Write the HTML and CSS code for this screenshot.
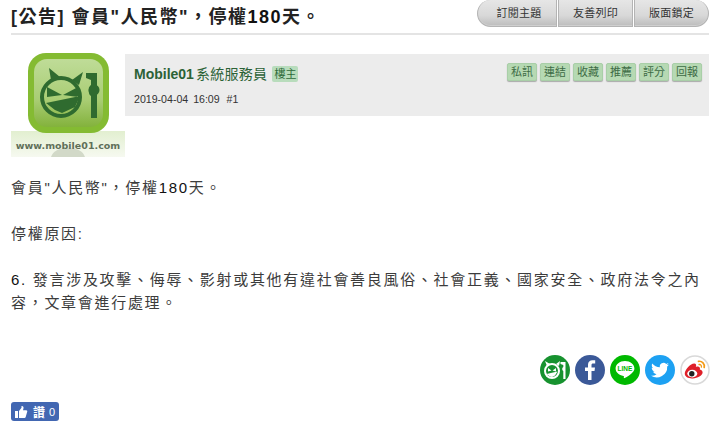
FILE: index.html
```html
<!DOCTYPE html>
<html lang="zh-Hant">
<head>
    <meta charset="UTF-8">
    <title>[公告] 會員"人民幣"，停權180天。</title>
    <link rel="stylesheet" href="styles.css">
</head>
<body>
    <div class="topic-head">
        <h1 class="topic-title">[公告] 會員"人民幣"，停權<span class="num">180</span>天。</h1>
        <div class="topic-tools">
            <a class="tool-btn tool-first">訂閱主題</a>
            <a class="tool-btn">友善列印</a>
            <a class="tool-btn tool-last">版面鎖定</a>
        </div>
    </div>

    <div class="post">
        <div class="avatar">
            <svg width="114" height="110" viewBox="0 0 114 110">
                <defs>
                    <linearGradient id="tile" x1="0" y1="0" x2="0" y2="1">
                        <stop offset="0" stop-color="#bfdc98"/>
                        <stop offset="0.6" stop-color="#a9cd74"/>
                        <stop offset="1" stop-color="#83b23c"/>
                    </linearGradient>
                    <linearGradient id="strip" x1="0" y1="0" x2="0" y2="1">
                        <stop offset="0" stop-color="#e2efd0"/>
                        <stop offset="1" stop-color="#f6f9f0"/>
                    </linearGradient>
                </defs>
                <rect x="0" y="82" width="114" height="26" fill="url(#strip)"/>
                <path d="M40 108c2-6 8-9 17-9s15 3 17 9z" fill="#d2d9c8"/>
                <rect x="17" y="4" width="81" height="80" rx="18" fill="#84bb32"/>
                <rect x="23" y="10" width="69" height="68" rx="13" fill="url(#tile)"/>
                <circle cx="50" cy="48" r="19" fill="none" stroke="#2f6b2f" stroke-width="4"/>
                <path d="M40 31l-2-12 11 9zM61 31l11-8-4 13z" fill="#2f6b2f"/>
                <path d="M36 38l15 8-15 2zM67 38l-15 8 15 2zM35 54l34-7-5 11-13 6-7-3z" fill="#2f6b2f"/>
                <path d="M75 24h11v45h-6V47c-3-1-3-9 0-11v-5l-5-2z" fill="#2f6b2f"/>
                <circle cx="83" cy="41" r="5.500" fill="#2f6b2f"/>
                <text class="avatar-url" x="57" y="100" text-anchor="middle">www.mobile01.com</text>
            </svg>
        </div>
        <div class="post-head">
            <div class="author-info">
                <div class="author-line">
                    <a class="author-name"><b>Mobile01</b><span class="author-cjk">系統服務員</span></a>
                    <span class="owner-tag">樓主</span>
                </div>
                <div class="post-date">2019-04-04 16:09 <span class="post-no">#1</span></div>
            </div>
            <div class="post-actions">
                <a class="act-btn">私訊</a>
                <a class="act-btn">連結</a>
                <a class="act-btn">收藏</a>
                <a class="act-btn">推薦</a>
                <a class="act-btn">評分</a>
                <a class="act-btn">回報</a>
            </div>
        </div>
    </div>

    <div class="post-body">
        <p>會員"人民幣"，停權<span class="num">180</span>天。</p>
        <p>停權原因:</p>
        <p class="post-rule">6. 發言涉及攻擊、侮辱、影射或其他有違社會善良風俗、社會正義、國家安全、政府法令之內容，文章會進行處理。</p>
    </div>

    <div class="share-row">
        <svg class="share-icon" viewBox="0 0 30 30">
            <circle cx="15" cy="15" r="15" fill="#17922f"/>
            <circle cx="12" cy="16" r="7" fill="none" stroke="#fff" stroke-width="2"/>
            <path d="M7 11L5 6l5 3zM16 9l4-3-1 5zM8 13l3.500 2.500-3.500 1zM16 13l-3.500 2.500 3.500 1zM6.500 19l11-2.500-2.500 4-3 1.500-2-.5z" fill="#fff"/>
            <path d="M20.500 7h5v17h-2.200v-8c-1.500-.5-1.500-3.500 0-4v-2l-2.800-1z" fill="#fff"/>
        </svg>
        <svg class="share-icon" viewBox="0 0 30 30">
            <circle cx="15" cy="15" r="15" fill="#3b5998"/>
            <path d="M16.500 25v-9h3l.5-3.600h-3.500v-2.200c0-1 .3-1.700 1.800-1.700h1.900V5.300c-.3 0-1.400-.1-2.700-.1-2.700 0-4.500 1.600-4.500 4.600v2.600H10V16h3v9z" fill="#fff"/>
        </svg>
        <svg class="share-icon" viewBox="0 0 30 30">
            <circle cx="15" cy="15" r="15" fill="#00b900"/>
            <path d="M15 6c-5.200 0-9.400 3.300-9.400 7.500 0 3.700 3.300 6.800 7.800 7.400.8.200.6.600.4 1.700-.1.500.3.900.9.500 2.400-1.200 6.500-3.900 8.200-6.100.9-1.100 1.500-2.300 1.500-3.500C24.400 9.300 20.200 6 15 6z" fill="#fff"/>
            <text class="line-word" x="15" y="16" text-anchor="middle">LINE</text>
        </svg>
        <svg class="share-icon" viewBox="0 0 30 30">
            <circle cx="15" cy="15" r="15" fill="#1da1f2"/>
            <path d="M24 9.400c-.7.300-1.400.5-2.100.6.800-.5 1.300-1.200 1.600-2-.7.400-1.500.7-2.300.9a3.700 3.700 0 0 0-6.300 3.400c-3.100-.2-5.800-1.600-7.600-3.900-1 1.700-.5 3.800 1.100 4.900-.6 0-1.200-.2-1.700-.5 0 1.800 1.300 3.300 3 3.700-.5.100-1.100.2-1.700.1.500 1.500 1.900 2.500 3.500 2.600A7.500 7.500 0 0 1 6 20.700a10.500 10.500 0 0 0 16.200-9.300c.7-.5 1.300-1.200 1.800-2z" fill="#fff"/>
        </svg>
        <svg class="share-icon" viewBox="0 0 30 30">
            <circle cx="15" cy="15" r="14" fill="#fff" stroke="#d9d9d9" stroke-width="1.500"/>
            <path d="M12.800 23.500c-4.300.3-7.800-1.600-8-4.400-.2-2.700 2.100-6.500 6-9.300 2.300-1.500 4.600-1.700 5.200-.3.300.8.200 1.600-.2 2.500 1.600-.6 3.200-.5 3.900.4.400.6.400 1.200.1 2 2 .6 3 1.800 2.800 3.400-.3 3-4.900 5.300-9.800 5.700z" fill="#df2029"/>
            <ellipse cx="12.300" cy="18.600" rx="5" ry="3.800" fill="#fff"/>
            <circle cx="11.800" cy="18.800" r="2.700" fill="#222"/>
            <path d="M18.500 6.300c3.600-.5 6.500 2.500 5.700 6.200" fill="none" stroke="#f39a16" stroke-width="1.700" stroke-linecap="round"/>
            <path d="M19 9.500c1.600-.2 2.800 1 2.400 2.700" fill="none" stroke="#f39a16" stroke-width="1.300" stroke-linecap="round"/>
        </svg>
    </div>

    <div class="like-row">
        <a class="like-btn">
            <svg width="14" height="14" viewBox="0 0 14 14">
                <path d="M1 6h3v7H1zM5 6l2.500-3.200V1c1.500-.3 2.300.8 2 2.200L9 5.200h3.200c1 0 1.300.9 1 1.600l-1.500 5.300c-.2.600-.6.900-1.200.9H5z" fill="#fff"/>
            </svg>
            <span class="like-word">讚</span>
            <span>0</span>
        </a>
    </div>
</body>
</html>
```

FILE: styles.css
```css
body {
    margin: 0;
    padding: 0 11px;
    background: #fff;
    color: #333;
    font-family: "Liberation Sans", "Noto Sans CJK TC", sans-serif;
    overflow: hidden;
}
.num {
    color: #111;
}
.topic-head {
    display: flex;
    justify-content: space-between;
    align-items: flex-start;
    height: 33px;
    border-bottom: 2px solid #e4e4e4;
}
.topic-title {
    margin: 5px 0 0 0;
    font-size: 18px;
    line-height: 24px;
    font-weight: bold;
    letter-spacing: 1.5px;
    color: #222;
}
.topic-tools {
    display: flex;
    gap: 1px;
    height: 27px;
    margin-left: auto;
}
.tool-btn {
    width: 75px;
    height: 27px;
    box-sizing: border-box;
    border: 1px solid #b4b4b4;
    border-top: 0;
    text-align: center;
    font-size: 11px;
    letter-spacing: 0.3px;
    line-height: 26px;
    color: #333;
    background: linear-gradient(#e6e6e6, #d8d8d8 60%, #bcbcbc);
    box-shadow: inset 0 -1px 0 #cfcfcf;
}
.tool-first {
    width: 80px;
    padding-left: 4px;
    border-radius: 14px 0 0 14px;
}
.tool-last {
    border-radius: 0 14px 14px 0;
}
.post {
    display: flex;
    margin-top: 13px;
}
.avatar {
    width: 114px;
    height: 110px;
    margin-top: 1px;
}
.avatar-url {
    font-family: "DejaVu Sans", sans-serif;
    font-size: 9.500px;
    font-weight: bold;
    fill: #5f7059;
}
.post-head {
    flex: 1;
    display: flex;
    justify-content: space-between;
    height: 62px;
    margin-top: 6px;
    padding: 9px 7px 0 9px;
    box-sizing: border-box;
    background: #ececec;
}
.author-line {
    display: flex;
    align-items: center;
    height: 20px;
}
.author-name {
    font-size: 14px;
    color: #2b6236;
}
.author-cjk {
    margin-left: 2px;
    letter-spacing: 0.3px;
}
.owner-tag {
    margin: 1px 0 0 5px;
    padding: 0 2px;
    font-size: 11px;
    line-height: 16px;
    color: #2d6a3a;
    background: #b8dcbc;
    border-radius: 2px;
}
.post-date {
    margin-top: 8px;
    font-size: 10.600px;
    line-height: 16px;
    word-spacing: 2px;
    color: #333;
}
.post-no {
    margin-left: 2px;
}
.post-actions {
    display: flex;
    gap: 3px;
}
.act-btn {
    width: 30px;
    height: 18px;
    box-sizing: border-box;
    border: 1px solid #a9cfa8;
    text-align: center;
    font-size: 11px;
    line-height: 16px;
    color: #3d6b45;
    background: #b6d9b3;
    border-radius: 2px;
    box-shadow: 0 1px 1px #aaa;
}
.post-body {
    margin-top: 17px;
    font-size: 15px;
    line-height: 23px;
    letter-spacing: 1.7px;
    color: #3c3c3c;
}
.post-body p {
    margin: 0 0 23px 0;
}
.post-rule::first-letter {
    color: #111;
}
.share-row {
    display: flex;
    justify-content: flex-end;
    gap: 5px;
    margin: 41px -1px 0 0;
}
.share-icon {
    width: 30px;
    height: 30px;
}
.line-word {
    font-family: "Liberation Sans", sans-serif;
    font-size: 6.500px;
    font-weight: bold;
    fill: #00b900;
}
.like-row {
    margin-top: 17px;
}
.like-btn {
    display: inline-flex;
    align-items: center;
    height: 19px;
    width: 48px;
    box-sizing: border-box;
    padding-left: 3px;
    font-size: 11px;
    color: #fff;
    background: #4267b2;
    border-radius: 3px;
}
.like-word {
    margin: 0 4px 0 5px;
    font-size: 12px;
    font-weight: bold;
}
```
